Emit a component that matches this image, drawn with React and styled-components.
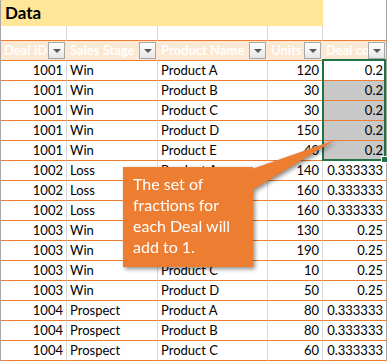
import React from 'react';
import styled, { createGlobalStyle } from 'styled-components';

const GlobalStyle = createGlobalStyle`
  html, body {
    margin: 0;
    padding: 0;
    background: #fff;
  }
  body {
    font-family: Lato, 'Liberation Sans', sans-serif;
  }
`;

const ORANGE = '#ED7D31';
const GRID = '#D9D9D9';

const Sheet = styled.div`
  position: relative;
  width: 388px;
  height: 361px;
  overflow: hidden;
`;

const Grid = styled.div`
  display: grid;
  grid-template-columns: 66px 91px 110px 55px 64px;
  border-left: 1px solid #a6a6a6;
  box-sizing: border-box;
  width: 388px;
`;

const TitleCell = styled.div`
  grid-column: 1 / 5;
  height: 26px;
  background: #ffe699;
  font-size: 17px;
  font-weight: 700;
  color: #000;
  padding-left: 4px;
  line-height: 26px;
`;

const BlankCell = styled.div`
  height: ${p => p.h}px;
  box-sizing: border-box;
  border-right: 1px solid ${p => (p.last ? '#a6a6a6' : GRID)};
  background: #fff;
`;

const HeadCell = styled.div`
  display: flex;
  align-items: center;
  height: 21px;
  box-sizing: border-box;
  border-top: 1px solid ${ORANGE};
  border-bottom: 1px solid ${ORANGE};
  border-right: 1px solid ${p => (p.last ? '#a6a6a6' : '#fde9d3')};
  background: #fde9d3;
  padding-left: 3px;

  > span {
    flex: 1;
    min-width: 0;
    overflow: hidden;
    white-space: nowrap;
    color: #fff;
    font-weight: 700;
    font-size: 13px;
    line-height: 19px;
  }
`;

const FilterBtn = styled.div`
  flex: none;
  width: 17px;
  height: 17px;
  box-sizing: border-box;
  border: 1px solid #a6a6a6;
  background: linear-gradient(#ffffff, #e6e6e6);
  display: flex;
  align-items: center;
  justify-content: center;
  margin-right: 1px;

  &::after {
    content: '';
    border-left: 4px solid transparent;
    border-right: 4px solid transparent;
    border-top: 4px solid #595959;
    margin-top: 1px;
  }
`;

const Cell = styled.div`
  height: 20px;
  box-sizing: border-box;
  border-bottom: 1px solid ${ORANGE};
  border-right: 1px solid ${p => (p.last ? '#a6a6a6' : GRID)};
  background: ${p => (p.shade ? '#c8c8c8' : '#fff')};
  font-size: 13px;
  line-height: 19px;
  color: #000;
  white-space: nowrap;
  overflow: hidden;
  text-align: ${p => (p.num ? 'right' : 'left')};
  padding: 0 3px 0 3px;
`;

const Selection = styled.div`
  position: absolute;
  left: 322px;
  top: 59px;
  width: 64px;
  height: 102px;
  box-sizing: border-box;
  border: 2px solid #217346;
  pointer-events: none;

  &::after {
    content: '';
    position: absolute;
    right: -4px;
    bottom: -4px;
    width: 5px;
    height: 5px;
    background: #217346;
    border: 1px solid #fff;
  }
`;

const Callout = styled.div`
  position: absolute;
  left: 123px;
  top: 167px;
  width: 130px;
  height: 100px;
  filter: drop-shadow(2px 2px 2px rgba(0, 0, 0, 0.45));
`;

const CalloutBody = styled.div`
  position: relative;
  height: 100%;
  box-sizing: border-box;
  background: ${ORANGE};
  padding: 6px 6px 0 10px;
  color: #fff;
  font-size: 16px;
  line-height: 21px;
`;

const Pointer = styled.svg`
  position: absolute;
  left: 0;
  top: -30px;
  overflow: visible;
`;

const rows = [
  ['1001', 'Win', 'Product A', '120', '0.2'],
  ['1001', 'Win', 'Product B', '30', '0.2'],
  ['1001', 'Win', 'Product C', '30', '0.2'],
  ['1001', 'Win', 'Product D', '150', '0.2'],
  ['1001', 'Win', 'Product E', '40', '0.2'],
  ['1002', 'Loss', 'Product A', '140', '0.333333'],
  ['1002', 'Loss', 'Product B', '160', '0.333333'],
  ['1002', 'Loss', 'Product C', '160', '0.333333'],
  ['1003', 'Win', 'Product A', '130', '0.25'],
  ['1003', 'Win', 'Product B', '190', '0.25'],
  ['1003', 'Win', 'Product C', '10', '0.25'],
  ['1003', 'Win', 'Product D', '50', '0.25'],
  ['1004', 'Prospect', 'Product A', '80', '0.333333'],
  ['1004', 'Prospect', 'Product B', '80', '0.333333'],
  ['1004', 'Prospect', 'Product C', '60', '0.333333'],
];

const headers = ['Deal ID', 'Sales Stage', 'Product Name', 'Units', 'Deal count fraction'];
const numCols = [true, false, false, true, true];

const App = () => (
  <>
    <GlobalStyle />
    <Sheet>
      <Grid>
        <TitleCell>Data</TitleCell>
        <BlankCell h={26} last />
        {[0, 1, 2, 3, 4].map(i => (
          <BlankCell key={i} h={14} last={i === 4} />
        ))}
        {headers.map((h, i) => (
          <HeadCell key={h} last={i === 4}>
            <span>{h}</span>
            <FilterBtn />
          </HeadCell>
        ))}
        {rows.map((r, ri) =>
          r.map((v, ci) => (
            <Cell
              key={`${ri}-${ci}`}
              num={numCols[ci]}
              last={ci === 4}
              shade={ci === 4 && ri >= 1 && ri <= 4}
            >
              {v}
            </Cell>
          ))
        )}
      </Grid>
      <Selection />
      <Callout>
        <Pointer width="220" height="60" viewBox="0 0 220 60">
          <polygon points="126,33 212,3 126,55" fill={ORANGE} />
        </Pointer>
        <CalloutBody>
          The set of
          <br />
          fractions for
          <br />
          each Deal will
          <br />
          add to 1.
        </CalloutBody>
      </Callout>
    </Sheet>
  </>
);

export default App;
